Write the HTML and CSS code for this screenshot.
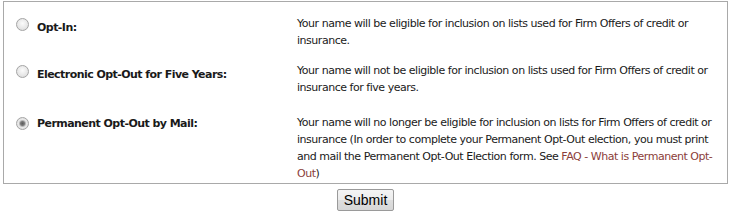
FILE: index.html
```html
<!DOCTYPE html>
<html lang="en">
<head>
    <meta charset="UTF-8">
    <title>Opt-Out Election</title>
    <link rel="stylesheet" href="styles.css">
</head>
<body>
    <form class="election-form">
        <!-- Election choices -->
        <div class="choices">
            <label class="choice">
                <input type="radio" name="election" value="optin">
                <span class="choice-name">Opt-In:</span>
                <span class="choice-desc">Your name will be eligible for inclusion on lists used for Firm Offers of credit or insurance.</span>
            </label>
            <label class="choice">
                <input type="radio" name="election" value="five">
                <span class="choice-name">Electronic Opt-Out for Five Years:</span>
                <span class="choice-desc">Your name will not be eligible for inclusion on lists used for Firm Offers of credit or insurance for five years.</span>
            </label>
            <label class="choice choice-last">
                <input type="radio" name="election" value="permanent" checked>
                <span class="choice-name">Permanent Opt-Out by Mail:</span>
                <span class="choice-desc">Your name will no longer be eligible for inclusion on lists for Firm Offers of credit or insurance (In order to complete your Permanent Opt-Out election, you must print and mail the Permanent Opt-Out Election form. See <a href="#">FAQ - What is Permanent Opt-Out</a>)</span>
            </label>
        </div>

        <div class="actions">
            <button type="submit" class="submit-btn">Submit</button>
        </div>
    </form>
</body>
</html>
```

FILE: styles.css
```css
body {
    margin: 0;
    padding: 0;
    background: white;
    color: #1a1a1a;
    font-family: "DejaVu Sans", Verdana, sans-serif;
    font-size: 11px;
}

.election-form {
    padding: 1px 3px 0 3px;
}

.choices {
    border: 1px solid #a9a9a9;
    padding: 13px 0 1px 12px;
}

.choice {
    display: grid;
    grid-template-columns: 21px 260px 1fr;
    align-items: start;
    line-height: 17px;
    margin-bottom: 13px;
}

.choice-last {
    margin-top: 18px;
    margin-bottom: 0;
}

/* old windows-style radio */
.choice input {
    appearance: none;
    -webkit-appearance: none;
    width: 13px;
    height: 13px;
    margin: 3px 0 0 0;
    border: 1px solid #a4a4a4;
    border-radius: 50%;
    background: radial-gradient(circle at 50% 40%, #fbfbfb 0%, #e6e6e6 60%, #d4d4d4 100%);
    box-sizing: border-box;
}

.choice input:checked {
    background: radial-gradient(circle, #5c5c5c 0, #7a7a7a 2px, #b8b8b8 3px, #e9e9e9 4px, #dadada 100%);
}

.choice-name {
    font-weight: bold;
    letter-spacing: -0.55px;
    padding-top: 4px;
}

.choice-last .choice-name {
    padding-top: 1px;
}

.choice-desc {
    letter-spacing: -0.47px;
    padding-right: 6px;
}

.choice-desc a {
    color: #8b3e3a;
    text-decoration: none;
}

.actions {
    display: flex;
    justify-content: center;
    padding-top: 5px;
}

.submit-btn {
    font-family: "Liberation Sans", Arial, sans-serif;
    font-size: 14px;
    color: black;
    padding: 2px 6px;
    border: 1px solid #9a9a9a;
    border-radius: 2px;
    background: linear-gradient(#f4f4f4, #ececec 50%, #dedede 51%, #d6d6d6);
}
```
